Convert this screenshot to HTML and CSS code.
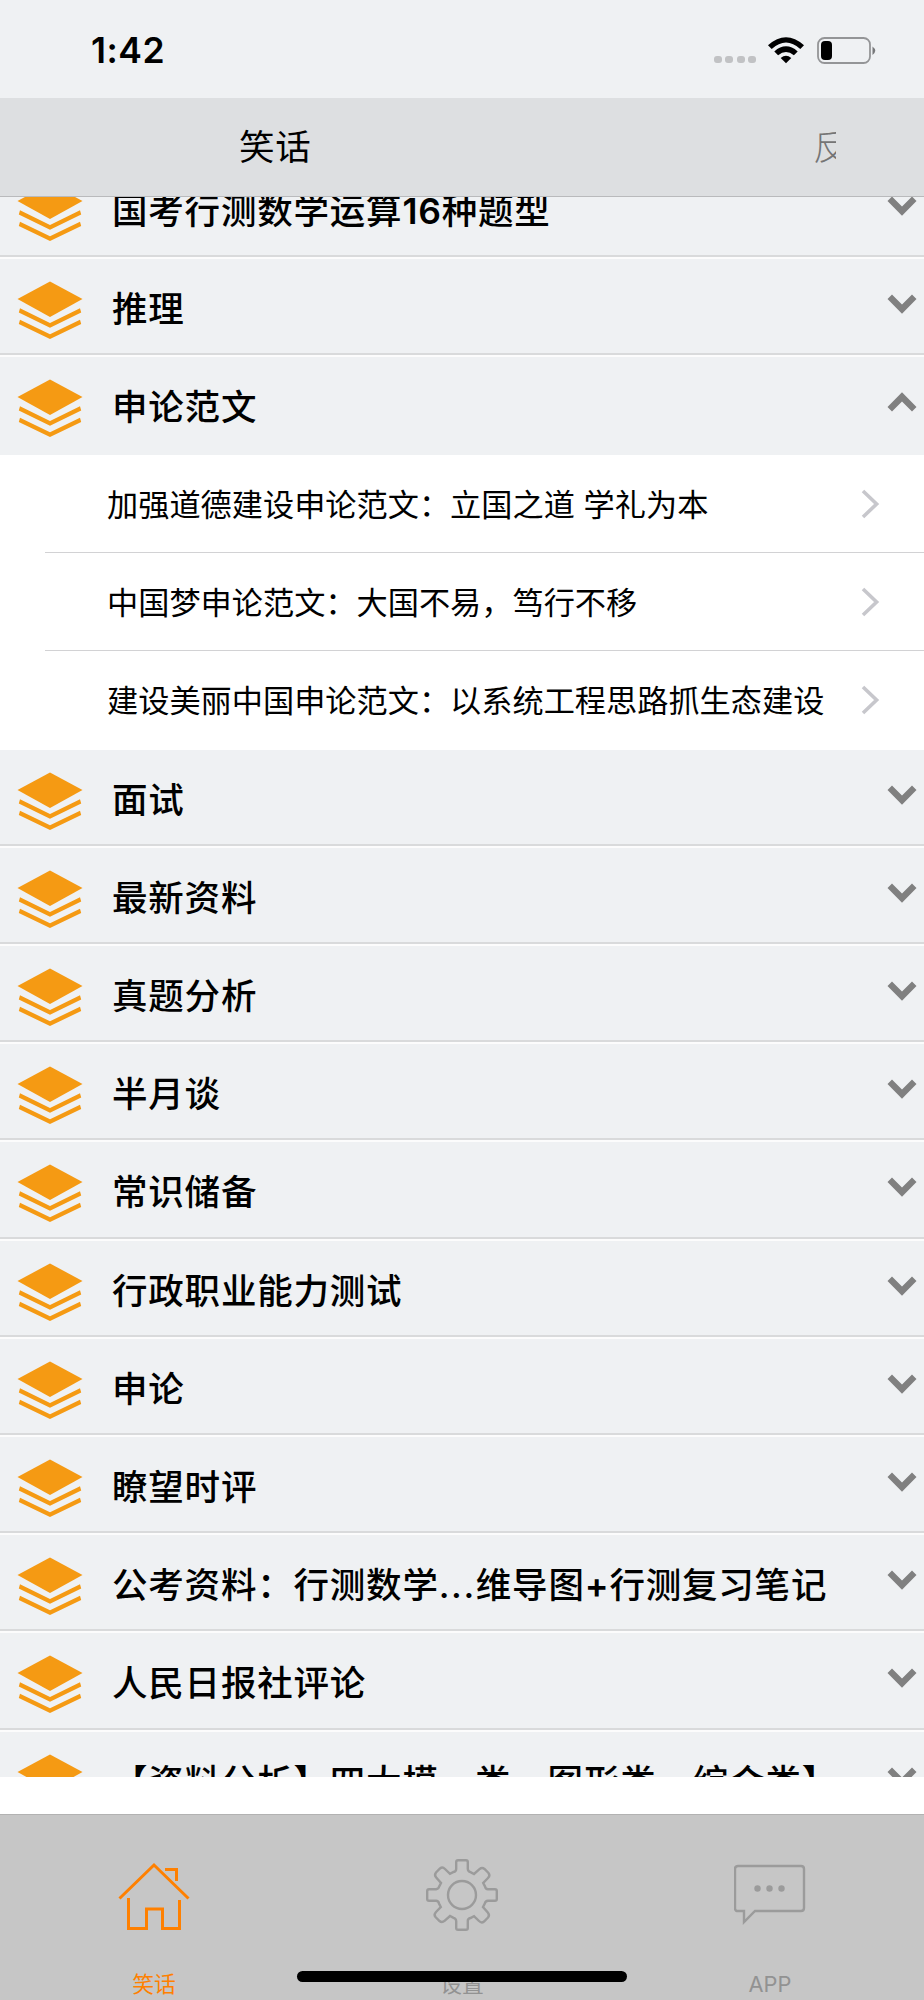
FILE: index.html
```
<!DOCTYPE html>
<html lang="zh-CN">
  <head>
    <meta charset="UTF-8" />
    <meta name="viewport" content="width=device-width, initial-scale=1.0" />
    <title>笑话</title>
    <link rel="stylesheet" href="styles.css" />
  </head>
  <body>
    <svg class="defs" width="0" height="0">
      <symbol id="layers" viewBox="0 0 66 58">
        <path d="M33 0.5 65.5 18 33 36 0.5 18z" />
        <path d="M3 27.2 1.8 31.5 33 46.7 64.2 31.5 63 27.2 33 42z" />
        <path d="M3 38.8 1.8 43 33 58 64.2 43 63 38.8 33 53.2z" />
      </symbol>
      <symbol id="arrow" viewBox="0 0 30 20">
        <path d="M0.5 5 5 0.5 15 10.5 25 0.5 29.5 5 15 19.7z" />
      </symbol>
      <symbol id="chevron" viewBox="0 0 19 30">
        <path d="M2 2 15.6 15 2 28" fill="none" stroke="#c7c7cc" stroke-width="3.6" />
      </symbol>
    </svg>

    <div class="status-bar">
      <span class="time">1:42</span>
      <div class="indicators">
        <div class="signal"><i></i><i></i><i></i><i></i></div>
        <svg class="wifi" viewBox="0 0 36 27">
          <path d="M0 8.2Q18-7.8 36 8.2L32.3 12Q18-1 3.7 12z" />
          <path d="M6.3 14.4Q18 4.2 29.7 14.4L25.9 18.3Q18 11.5 10.1 18.3z" />
          <path d="M12.7 21Q18 16.5 23.3 21L18 26.3z" />
        </svg>
        <svg class="battery" viewBox="0 0 60 28">
          <rect x="1" y="1" width="52" height="25" rx="6.5" fill="none" stroke="#949597" stroke-width="1.8" />
          <rect x="4" y="4" width="11" height="19" rx="4" />
          <path d="M55.5 9.5Q61 13.8 55.5 18z" fill="#77787a" />
        </svg>
      </div>
    </div>

    <div class="nav-bar">
      <h1 class="nav-title">笑话</h1>
      <span class="nav-action">反馈</span>
    </div>

    <div class="list">
      <ul class="sections">
        <li class="section"><svg class="layers"><use href="#layers" /></svg><span class="name">国考行测数学运算<b>16</b>种题型</span><svg class="arrow"><use href="#arrow" /></svg></li>
        <li class="section"><svg class="layers"><use href="#layers" /></svg><span class="name">推理</span><svg class="arrow"><use href="#arrow" /></svg></li>
        <li class="section open"><svg class="layers"><use href="#layers" /></svg><span class="name">申论范文</span><svg class="arrow"><use href="#arrow" /></svg></li>
        <li class="article"><span class="title">加强道德建设申论范文：立国之道 学礼为本</span><svg class="chevron"><use href="#chevron" /></svg></li>
        <li class="article"><span class="title">中国梦申论范文：大国不易，笃行不移</span><svg class="chevron"><use href="#chevron" /></svg></li>
        <li class="article"><span class="title">建设美丽中国申论范文：以系统工程思路抓生态建设</span><svg class="chevron"><use href="#chevron" /></svg></li>
        <li class="section"><svg class="layers"><use href="#layers" /></svg><span class="name">面试</span><svg class="arrow"><use href="#arrow" /></svg></li>
        <li class="section"><svg class="layers"><use href="#layers" /></svg><span class="name">最新资料</span><svg class="arrow"><use href="#arrow" /></svg></li>
        <li class="section"><svg class="layers"><use href="#layers" /></svg><span class="name">真题分析</span><svg class="arrow"><use href="#arrow" /></svg></li>
        <li class="section"><svg class="layers"><use href="#layers" /></svg><span class="name">半月谈</span><svg class="arrow"><use href="#arrow" /></svg></li>
        <li class="section"><svg class="layers"><use href="#layers" /></svg><span class="name">常识储备</span><svg class="arrow"><use href="#arrow" /></svg></li>
        <li class="section"><svg class="layers"><use href="#layers" /></svg><span class="name">行政职业能力测试</span><svg class="arrow"><use href="#arrow" /></svg></li>
        <li class="section"><svg class="layers"><use href="#layers" /></svg><span class="name">申论</span><svg class="arrow"><use href="#arrow" /></svg></li>
        <li class="section"><svg class="layers"><use href="#layers" /></svg><span class="name">瞭望时评</span><svg class="arrow"><use href="#arrow" /></svg></li>
        <li class="section"><svg class="layers"><use href="#layers" /></svg><span class="name">公考资料：行测数学<span class="dots">...</span>维导图<b>+</b>行测复习笔记</span><svg class="arrow"><use href="#arrow" /></svg></li>
        <li class="section"><svg class="layers"><use href="#layers" /></svg><span class="name">人民日报社评论</span><svg class="arrow"><use href="#arrow" /></svg></li>
        <li class="section"><svg class="layers"><use href="#layers" /></svg><span class="name">【资料分析】四大模、类、图形类、综合类】</span><svg class="arrow"><use href="#arrow" /></svg></li>
      </ul>
    </div>

    <div class="tab-bar">
      <a class="tab active">
        <svg class="tab-icon" viewBox="0 0 72 72">
          <path d="M1.5 39.5 36 6 70.5 39.5M47 10.5H58.5V22M10.5 39V69.5H28.5V50H44.5V69.5H61.5V41" />
        </svg>
        <span class="tab-label">笑话</span>
      </a>
      <a class="tab">
        <svg class="tab-icon" viewBox="0 0 72 72">
          <circle cx="36" cy="36" r="14" />
          <path id="tooth" d="M36 1.2H40Q41.8 1.2 41.8 3V10Q42 12.5 44.5 13.2L48 15 53.5 10.2Q56 8 58.5 10L62.5 14Q64.5 16.5 62 19L57.2 24 59 27.5Q59.5 30.2 62 30.2H69Q70.8 30.2 70.8 32V36" />
          <use href="#tooth" transform="rotate(90 36 36)" />
          <use href="#tooth" transform="rotate(180 36 36)" />
          <use href="#tooth" transform="rotate(270 36 36)" />
        </svg>
        <span class="tab-label">设置</span>
      </a>
      <a class="tab">
        <svg class="tab-icon" viewBox="0 0 72 72">
          <path d="M4 7H67Q70 7 70 10V49Q70 52 67 52H21L10 63V52H4Q1 52 1 49V10Q1 7 4 7z" />
          <g class="bubble-dots"><circle cx="23.5" cy="29.5" r="3.2" /><circle cx="35.5" cy="29.5" r="3.2" /><circle cx="47.5" cy="29.5" r="3.2" /></g>
        </svg>
        <span class="tab-label">APP</span>
      </a>
      <div class="home-indicator"></div>
    </div>
  </body>
</html>
```

FILE: styles.css
```
* {
  box-sizing: border-box;
}
body {
  display: flex;
  flex-direction: column;
  height: 2000px;
  margin: 0;
  overflow: hidden;
  font-family: "Noto Sans CJK SC", sans-serif;
  color: #000;
  background-color: #fff;
}
svg {
  display: block;
  flex: none;
}
.defs {
  position: absolute;
}

/* status bar */
.status-bar {
  display: flex;
  flex: none;
  justify-content: space-between;
  height: 98px;
  padding: 30px 47px 0 91px;
  background-color: #eff1f3;
}
.time {
  font: 600 35.5px/42px "Inter", sans-serif;
  letter-spacing: 0.5px;
}
.indicators {
  display: flex;
  padding-top: 7px;
}
.signal {
  display: flex;
  gap: 3.3px;
  margin: 19px 12px 0 0;
}
.signal i {
  width: 8px;
  height: 7px;
  border-radius: 3px;
  background-color: #c1c2c4;
}
.wifi {
  width: 36px;
  height: 27px;
  margin-right: 13px;
}
.battery {
  width: 60px;
  height: 28px;
}

/* navigation bar */
.nav-bar {
  display: flex;
  flex: none;
  justify-content: space-between;
  height: 99px;
  padding: 0 88px 0 239px;
  border-bottom: 1px solid #b9babc;
  background-color: #dddfe1;
  line-height: 94px;
}
.nav-title {
  margin: 0;
  font-size: 35.5px;
  font-weight: 400;
  letter-spacing: 0.7px;
}
.nav-action {
  width: 23px;
  overflow: hidden;
  font-size: 35.5px;
  font-weight: 300;
  color: #757575;
  white-space: nowrap;
}

/* list */
.list {
  flex: none;
  height: 1580px;
  overflow: hidden;
}
.sections {
  margin: -36.5px 0 0;
  padding: 0;
  list-style: none;
}
.section,
.article {
  display: flex;
  align-items: flex-start;
  height: 98.2px;
}
.section {
  padding: 22px 7px 0 17.4px;
  border-bottom: 2px solid #fcfcfc;
  background-color: #eff1f3;
  box-shadow: inset 0 -2px #d9dadb;
}
.section.open {
  border-bottom: 0;
  box-shadow: none;
}
.layers {
  width: 66px;
  height: 58px;
  fill: #f59a13;
}
.name {
  flex: 1;
  margin-left: 28.6px;
  font-family: "Inter", "Noto Sans CJK SC", sans-serif;
  font-size: 35.5px;
  font-weight: 500;
  line-height: 58px;
  letter-spacing: 0.8px;
  white-space: nowrap;
}
.name b {
  font-weight: 600;
}
.dots {
  letter-spacing: 1.6px;
}
.arrow {
  width: 30px;
  height: 20px;
  margin-top: 13px;
  fill: #808080;
}
.open .arrow {
  transform: scaleY(-1);
}
.article {
  margin-left: 45px;
  padding: 0 44px 0 62px;
  border-bottom: 1px solid #d2d2d4;
}
.article:has(+ .section) {
  border-bottom: 0;
}
.title {
  flex: 1;
  font-family: "Inter", "Noto Sans CJK SC", sans-serif;
  font-size: 31.2px;
  line-height: 101px;
  white-space: nowrap;
}
.chevron {
  width: 19px;
  height: 30px;
  margin-top: 33.5px;
}

/* tab bar */
.tab-bar {
  position: relative;
  display: flex;
  flex: none;
  height: 186px;
  margin-top: auto;
  border-top: 1px solid #b2b2b2;
  background-color: #c6c6c6;
}
.tab {
  display: flex;
  flex: 1;
  flex-direction: column;
  align-items: center;
  padding-top: 44px;
  color: #929292;
}
.active {
  color: #ff8000;
}
.tab-icon {
  width: 72px;
  height: 72px;
  fill: none;
  stroke: #9b9b9b;
  stroke-width: 2.4;
}
.active .tab-icon {
  stroke: #ff8000;
  stroke-width: 3;
}
.tab-icon .bubble-dots {
  fill: #9b9b9b;
  stroke: none;
}
.tab-label {
  margin-top: 37px;
  font-family: "Inter", "Noto Sans CJK SC", sans-serif;
  font-size: 21.8px;
  line-height: 32px;
}
.home-indicator {
  position: absolute;
  bottom: 18px;
  left: 297px;
  width: 330px;
  height: 11px;
  border-radius: 6px;
  background-color: #000;
}
```
